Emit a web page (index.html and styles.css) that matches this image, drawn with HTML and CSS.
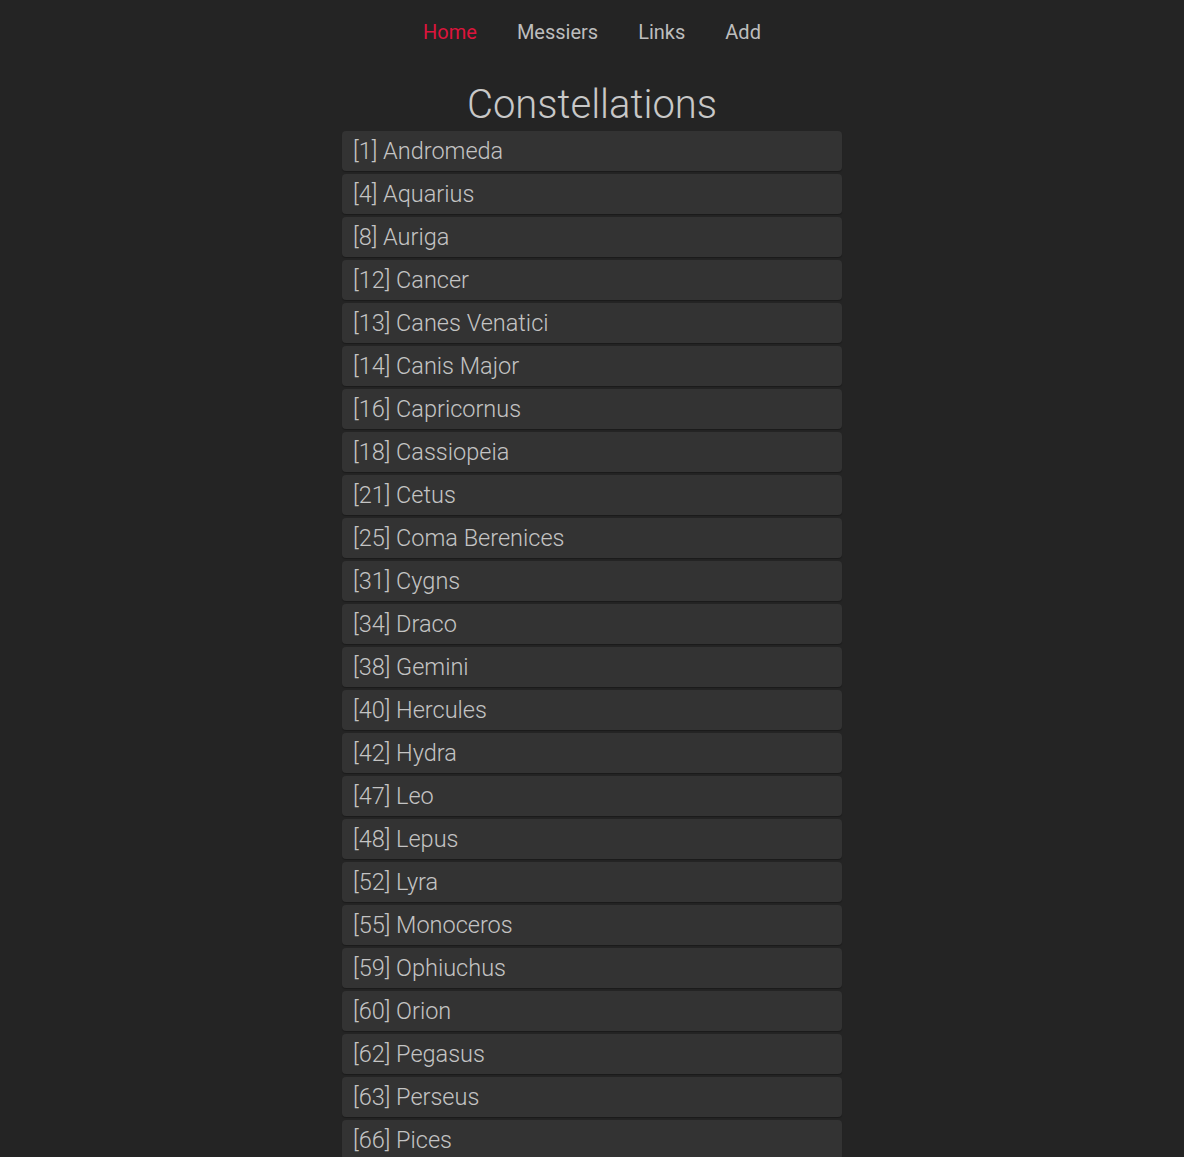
FILE: index.html
```html
<!DOCTYPE html>
<html>
<head>
<meta charset="utf-8">
<link rel="stylesheet" href="styles.css">
</head>
<body>
<nav class="nav">
  <a class="nav-link active" href="#">Home</a>
  <a class="nav-link" href="#">Messiers</a>
  <a class="nav-link" href="#">Links</a>
  <a class="nav-link" href="#">Add</a>
</nav>
<main class="main">
  <h1 class="title">Constellations</h1>
  <ul class="list">
    <li class="item">[1] Andromeda</li>
    <li class="item">[4] Aquarius</li>
    <li class="item">[8] Auriga</li>
    <li class="item">[12] Cancer</li>
    <li class="item">[13] Canes Venatici</li>
    <li class="item">[14] Canis Major</li>
    <li class="item">[16] Capricornus</li>
    <li class="item">[18] Cassiopeia</li>
    <li class="item">[21] Cetus</li>
    <li class="item">[25] Coma Berenices</li>
    <li class="item">[31] Cygns</li>
    <li class="item">[34] Draco</li>
    <li class="item">[38] Gemini</li>
    <li class="item">[40] Hercules</li>
    <li class="item">[42] Hydra</li>
    <li class="item">[47] Leo</li>
    <li class="item">[48] Lepus</li>
    <li class="item">[52] Lyra</li>
    <li class="item">[55] Monoceros</li>
    <li class="item">[59] Ophiuchus</li>
    <li class="item">[60] Orion</li>
    <li class="item">[62] Pegasus</li>
    <li class="item">[63] Perseus</li>
    <li class="item">[66] Pices</li>
  </ul>
</main>
</body>
</html>
```

FILE: styles.css
```css
html, body {
  margin: 0;
  padding: 0;
  background: #242424;
}
body {
  font-family: Roboto, "Noto Sans", sans-serif;
  color: #c4c4c4;
}
.nav {
  display: flex;
  justify-content: center;
  gap: 40px;
  padding-top: 19px;
  height: 45px;
  box-sizing: content-box;
}
.nav-link {
  font-size: 20px;
  line-height: 26px;
  color: #bdbdbd;
  text-decoration: none;
}
.nav-link.active {
  color: #dc143c;
}
.main {
  width: 500px;
  margin: 0 auto;
}
.title {
  margin: 0;
  padding-top: 14px;
  text-align: center;
  font-size: 40px;
  font-weight: 300;
  line-height: 53px;
  color: #c8c8c8;
}
.list {
  list-style: none;
  margin: 0;
  padding: 0;
  display: flex;
  flex-direction: column;
  gap: 3px;
}
.item {
  height: 40px;
  line-height: 40px;
  padding: 0 11px;
  background: #333333;
  border-radius: 4px;
  font-size: 23.5px;
  font-weight: 300;
  color: #c4c4c4;
  box-shadow: 0 1px 1px rgba(0,0,0,0.25);
}
```
